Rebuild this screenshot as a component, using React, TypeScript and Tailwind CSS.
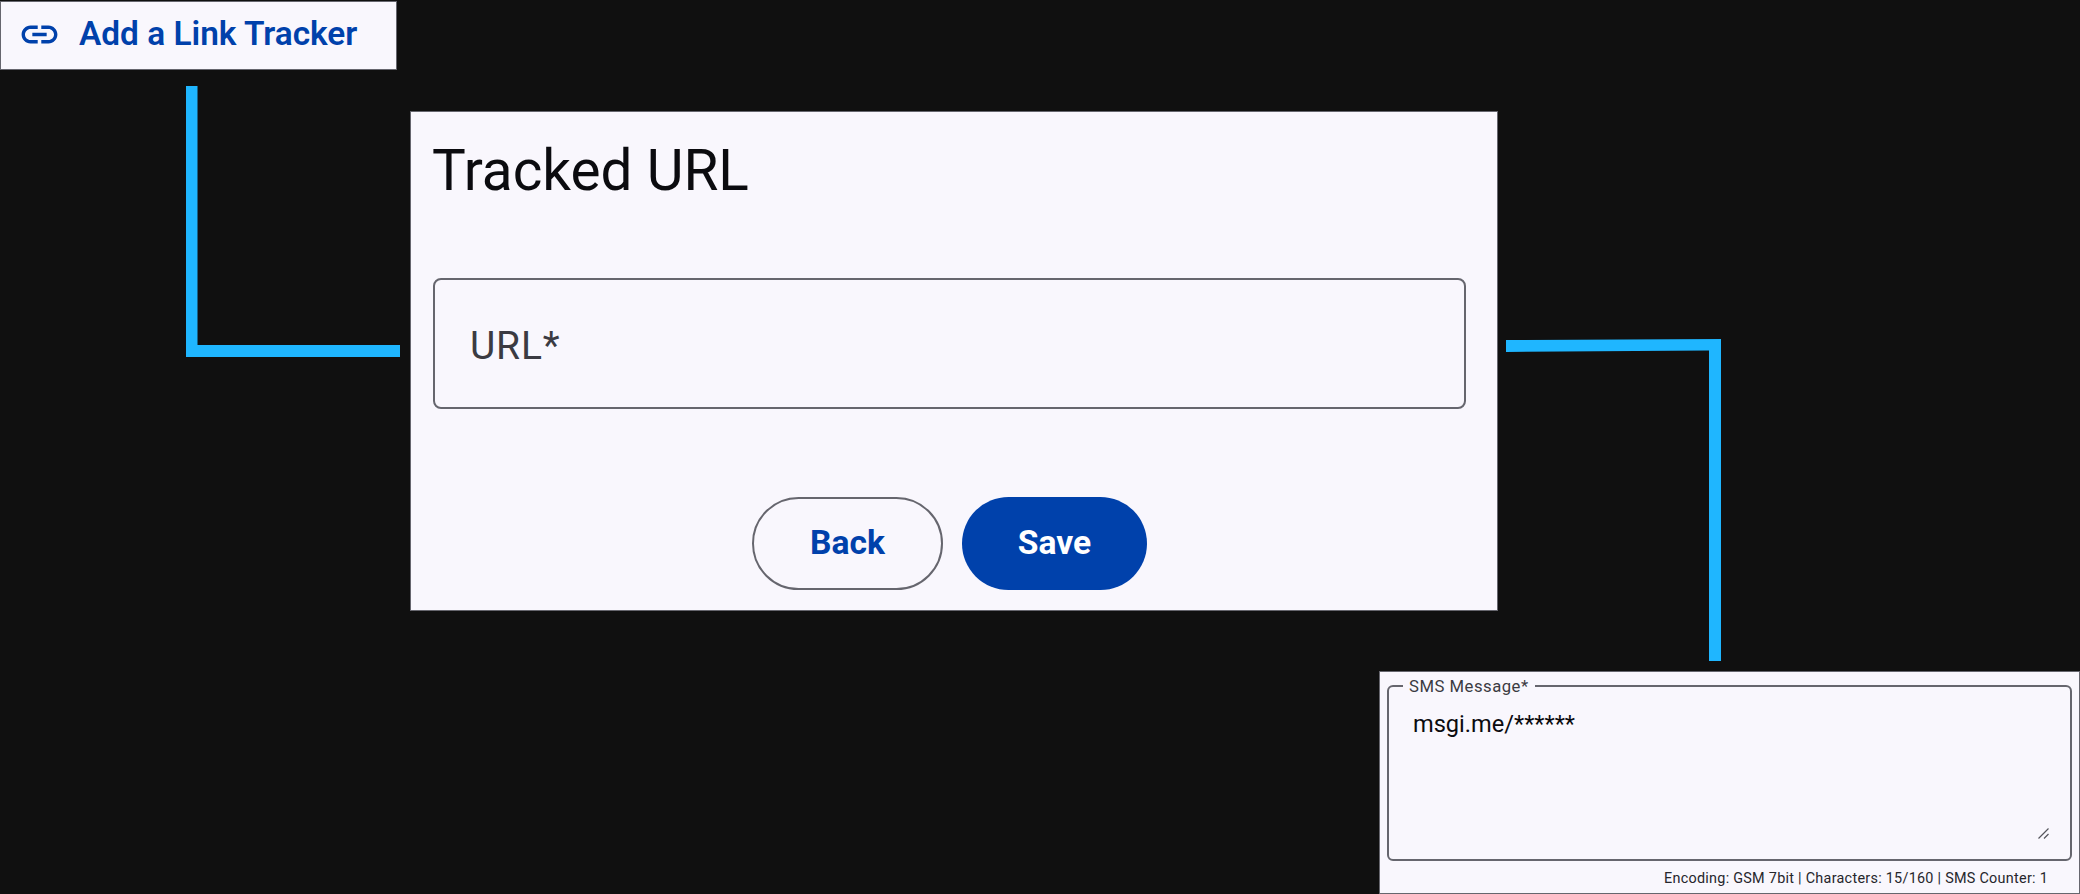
export default function App() {
  return (
    <div className="relative h-[894px] w-[2080px] overflow-hidden bg-[#101010] font-['Roboto',sans-serif]">
      <div className="absolute left-0 top-px flex h-[69px] w-[397px] items-center gap-[18px] border border-[#66666e] bg-[#f9f7fd] pb-[2px] pl-[17px] text-[#0041ab]">
        <svg width="43" height="43" viewBox="0 0 24 24" fill="currentColor" aria-hidden="true">
          <path d="M3.9 12c0-1.71 1.39-3.1 3.1-3.1h4V7H7c-2.76 0-5 2.24-5 5s2.24 5 5 5h4v-1.9H7c-1.71 0-3.1-1.39-3.1-3.1zM8 13h8v-2H8v2zm9-6h-4v1.9h4c1.71 0 3.1 1.39 3.1 3.1s-1.39 3.1-3.1 3.1h-4V17h4c2.76 0 5-2.24 5-5s-2.24-5-5-5z" />
        </svg>
        <span className="relative -top-px text-[33.4px] font-semibold leading-none">Add a Link Tracker</span>
      </div>

      <svg className="absolute left-0 top-0" width="2080" height="894" fill="#1fb6ff" aria-hidden="true">
        <polygon points="186,86 197.5,86 197.5,345 400,345 400,357 186,357" />
        <polygon points="1506,340 1721,339 1721,661 1709,661 1709,350.5 1506,352" />
      </svg>

      <div className="absolute left-[410px] top-[111px] flex h-[500px] w-[1088px] flex-col border border-[#66666e] bg-[#f9f7fd] pb-5 pl-[22px] pr-[31px] pt-[24px]">
        <h1 className="text-[56.7px] font-normal leading-[69px] -ml-px text-[#0b0b0f]">Tracked URL</h1>
        <div className="mt-[73px] flex h-[132px] items-center rounded-lg border-2 border-[#66666e] pl-[35px] pt-[6px] text-[39px] tracking-[0.8px] text-[#3b3b42]">
          URL*
        </div>
        <div className="mt-[88px] flex justify-center gap-[19px]">
          <button className="h-[93px] w-[191px] rounded-full border-[2.5px] border-[#66666e] text-[33.6px] font-bold text-[#0041ab]">
            Back
          </button>
          <button className="h-[93px] w-[185px] rounded-full bg-[#0041ab] text-[33.6px] font-bold text-white">
            Save
          </button>
        </div>
      </div>

      <div className="absolute left-[1379px] top-[671px] flex h-[223px] w-[701px] flex-col border border-[#66666e] bg-[#f9f7fd] px-[7px] pt-[2px]">
        <fieldset className="flex h-[187px] min-w-0 flex-col rounded-md border-2 border-[#66666e] pl-[24px] pr-[17px]">
          <legend className="ml-[-10px] px-[6px] pt-[3px] text-[16.7px] leading-[20px] tracking-[0.5px] text-[#3b3b42]">SMS Message*</legend>
          <textarea
            className="mt-[11px] h-[131px] w-full resize-none bg-transparent text-[23.6px] leading-[32px] text-[#0b0b0f] outline-none"
            defaultValue="msgi.me/******"
          />
        </fieldset>
        <svg className="absolute left-[658px] top-[156px]" width="11" height="11" viewBox="0 0 11 11" stroke="#55555c" strokeWidth="1.2" fill="none" aria-hidden="true">
          <path d="M0.5 10.5 L10.5 0.5 M6 10.5 L10.5 6" />
        </svg>
        <div className="mt-[8px] pr-[24px] text-right text-[14.4px] leading-[20px] tracking-[0.27px] text-[#26262c]">
          Encoding: GSM 7bit | Characters: 15/160 | SMS Counter: 1
        </div>
      </div>
    </div>
  );
}
